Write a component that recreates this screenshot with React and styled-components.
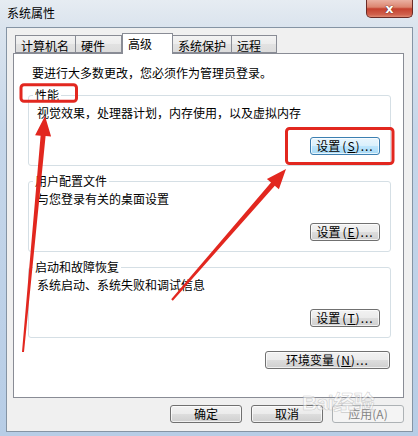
import styled, { createGlobalStyle } from 'styled-components';

const GlobalStyle = createGlobalStyle`
    html, body {
        margin: 0;
        padding: 0;
    }
    body {
        font-family: "Noto Sans CJK SC", "Noto Sans", sans-serif;
        font-size: 12px;
        color: #000;
    }
`

const Window = styled.div`
    position: relative;
    width: 418px;
    height: 436px;
    box-sizing: border-box;
    padding: 0 5px 4px 6px;
    display: flex;
    flex-direction: column;
    overflow: hidden;
    background: linear-gradient(180deg, #e6ecf2 0%, #dbe4ee 6%, #c6d7ea 30%, #b7cde6 100%);
`

const TitleBar = styled.div`
    display: flex;
    justify-content: space-between;
    align-items: flex-start;
    height: 27px;
    flex-shrink: 0;
`

const Title = styled.div`
    padding: 6px 0 0 1px;
    line-height: 14px;
`

const CloseButton = styled.div`
    width: 47px;
    height: 18px;
    box-sizing: border-box;
    border: 1px solid #6a2b26;
    border-top: none;
    border-radius: 0 0 5px 5px;
    background: linear-gradient(180deg, #eab0a2 0%, #dc8570 42%, #c5412f 52%, #d0604c 85%, #e08a72 100%);
    display: flex;
    align-items: center;
    justify-content: center;
    color: #fff;
    font-family: "DejaVu Sans", sans-serif;
    font-weight: bold;
    font-size: 13px;
    line-height: 1;
    text-shadow: 0 0 1px #5a1f1a, 0 0 1px #5a1f1a;
`

const Client = styled.div`
    flex: 1;
    border: 1px solid #8594a4;
    background: #f0f0f0;
    padding: 5px 8px 0 6px;
    display: flex;
    flex-direction: column;
`

const TabRow = styled.div`
    display: flex;
    align-items: flex-end;
    height: 21px;
    padding-left: 2px;
    margin-bottom: -1px;
    position: relative;
    z-index: 1;
`

const Tab = styled.div`
    box-sizing: border-box;
    width: ${p => p.$w}px;
    height: ${p => (p.$active ? 21 : 18)}px;
    margin-left: ${p => p.$ml || 0}px;
    margin-bottom: ${p => (p.$active ? 0 : 1)}px;
    border: 1px solid #898c95;
    border-bottom: ${p => (p.$active ? 'none' : '1px solid #898c95')};
    background: ${p => (p.$active ? '#fff' : 'linear-gradient(180deg, #f3f3f3 0%, #ececec 50%, #e2e2e2 51%, #dcdcdc 100%)')};
    padding: 3px 0 0 ${p => (p.$active ? 5 : 5)}px;
    line-height: 14px;
    white-space: nowrap;
`

const Panel = styled.div`
    flex: none;
    height: 345px;
    box-sizing: border-box;
    background: #fff;
    border: 1px solid #898c95;
    padding: 12px 12px 0 14px;
`

const Intro = styled.div`
    margin-left: 4px;
    line-height: 14px;
`

const Group = styled.fieldset`
    margin: 8px 0 0;
    min-width: 0;
    border: 1px solid #d5dfe5;
    border-radius: 3px;
    padding: 4px 10px 10px 8px;
`

const Legend = styled.legend`
    padding: 0 2px;
    margin-left: -4px;
    line-height: 14px;
`

const GroupText = styled.div`
    line-height: 14px;
`

const ButtonRow = styled.div`
    display: flex;
    justify-content: flex-end;
    margin-top: ${p => p.$mt || 0}px;
    padding-right: ${p => p.$pr || 0}px;
`

const Button = styled.div`
    width: ${p => p.$w}px;
    height: 18px;
    box-sizing: border-box;
    border: 1px solid ${p => (p.$focused ? '#3c7fb1' : p.$disabled ? '#adb2b5' : '#707070')};
    border-radius: 3px;
    background: ${p => (p.$focused
        ? 'linear-gradient(180deg, #eaf6fd 0%, #d9f0fc 50%, #bee6fd 51%, #a7d9f5 100%)'
        : p.$disabled
            ? '#f4f4f4'
            : 'linear-gradient(180deg, #f2f2f2 0%, #ebebeb 50%, #dddddd 51%, #cfcfcf 100%)')};
    box-shadow: ${p => (p.$disabled ? 'none' : 'inset 0 0 0 1px rgba(255,255,255,0.7)')};
    color: ${p => (p.$disabled ? '#838383' : '#000')};
    display: flex;
    align-items: center;
    justify-content: center;
    line-height: 14px;
    white-space: nowrap;
`

const Key = styled.span`
    letter-spacing: 1px;
    margin-left: 2px;
`

const Footer = styled.div`
    display: flex;
    justify-content: flex-end;
    gap: 9px;
    margin-top: 7px;
`

const Overlay = styled.svg`
    position: absolute;
    left: 0;
    top: 0;
    pointer-events: none;
`

const Watermark = styled.div`
    position: absolute;
    left: 302px;
    top: 386px;
    font-family: "Liberation Sans", "Noto Sans CJK SC", sans-serif;
    font-size: 21px;
    font-weight: bold;
    color: rgba(255, 255, 255, 0.55);
    -webkit-text-stroke: 0.6px rgba(150, 150, 150, 0.45);
    pointer-events: none;
    letter-spacing: -0.5px;
`

const Label = ({ text, k }) => (
    <>
        {text}<Key>(<u>{k}</u>)...</Key>
    </>
)

const tabs = [
    { name: '计算机名', w: 61, ml: 0 },
    { name: '硬件', w: 47, ml: -1 },
    { name: '高级', w: 51, ml: 0, active: true },
    { name: '系统保护', w: 60, ml: -1 },
    { name: '远程', w: 46, ml: -1 },
]

const groups = [
    { title: '性能', text: '视觉效果，处理器计划，内存使用，以及虚拟内存', k: 'S', focused: true },
    { title: '用户配置文件', text: '与您登录有关的桌面设置', k: 'E' },
    { title: '启动和故障恢复', text: '系统启动、系统失败和调试信息', k: 'T' },
]

const red = '#e2271f'

const App = () => {
    return (
        <Window>
            <GlobalStyle />
            <TitleBar>
                <Title>系统属性</Title>
                <CloseButton>x</CloseButton>
            </TitleBar>
            <Client>
                <TabRow>
                    {tabs.map(t => (
                        <Tab key={t.name} $w={t.w} $ml={t.ml} $active={t.active}>{t.name}</Tab>
                    ))}
                </TabRow>
                <Panel>
                    <Intro>要进行大多数更改，您必须作为管理员登录。</Intro>
                    {groups.map(g => (
                        <Group key={g.title}>
                            <Legend>{g.title}</Legend>
                            <GroupText>{g.text}</GroupText>
                            <ButtonRow $mt={17}>
                                <Button $w={70} $focused={g.focused}><Label text="设置" k={g.k} /></Button>
                            </ButtonRow>
                        </Group>
                    ))}
                    <ButtonRow $mt={13} $pr={1}>
                        <Button $w={125}><Label text="环境变量" k="N" /></Button>
                    </ButtonRow>
                </Panel>
                <Footer>
                    <Button $w={72}>确定</Button>
                    <Button $w={72}>取消</Button>
                    <Button $w={72} $disabled>应用(A)</Button>
                </Footer>
            </Client>
            <Watermark>Bai经验</Watermark>
            <Overlay width="418" height="436" viewBox="0 0 418 436">
                <rect x="21" y="84.8" width="55.5" height="16.5" rx="3" fill="none" stroke={red} strokeWidth="3" />
                <rect x="286.5" y="128.5" width="106.5" height="35" rx="3" fill="none" stroke={red} strokeWidth="3" />
                <polygon
                    fill={red}
                    points="24,352.1 45.6,136.1 51.1,136.6 45,116 35.1,135.2 40.6,135.7 22,351.9"
                />
                <polygon
                    fill={red}
                    points="172.8,300.7 274.8,185.7 278.9,189.3 286,169 266.9,178.9 271,182.5 171.2,299.3"
                />
            </Overlay>
        </Window>
    )
}

export default App;
